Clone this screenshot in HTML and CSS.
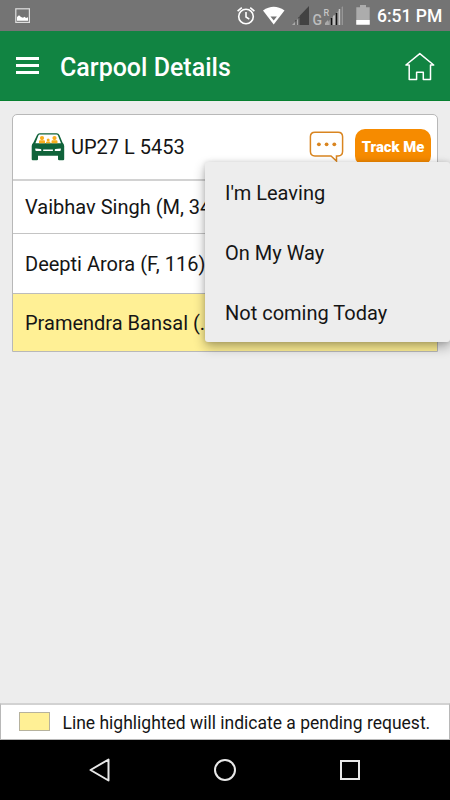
FILE: index.html
```html
<!DOCTYPE html>
<html lang="en">
<head>
<meta charset="utf-8">
<title>Carpool Details</title>
<link rel="stylesheet" href="styles.css">
</head>
<body>
<div class="screen">
  <div class="status">
    <svg class="shot" width="16" height="16" viewBox="0 0 16 16"><rect x=".8" y=".8" width="13.6" height="13.6" fill="none" stroke="#dedede" stroke-width="1.2"/><path d="M2 12.700V9l2-1.800L6 9l2 .8 1.500-1L11 10l2-.8v3.500z" fill="#fff"/></svg>
    <svg class="tray" width="126" height="31" viewBox="0 0 126 31">
      <g fill="none" stroke="#fff" stroke-width="1.6"><circle cx="11" cy="16.500" r="7.300"/><path d="M11 12v5l3.300 2.200M2.600 11.200l4.200-3.600M19.400 11.200l-4.200-3.600"/></g>
      <path d="M28 10.500Q38.700 3 49.500 10.500L38.700 24.500z" fill="#fff"/><path d="M35.500 16.500h6.400l-3.200 4z" fill="#747474"/>
      <path d="M64.500 25V16L74 6V25z" fill="#424242"/><path d="M57 25l7.500-7.500V25z" fill="#aaa"/><path d="M61 20v5M64 17v8" stroke="#333" stroke-width="1"/>
      <path d="M90 25L108 6v19z" fill="#969696"/><path d="M96.500 18v7M101.500 13v12" stroke="#111" stroke-width="1.500"/><path d="M99 15.500V25M104.500 9v16" stroke="#c8c8c8" stroke-width="1.500"/><path d="M106 8v17" stroke="#6b6b6b"/>
      <path d="M90 25v-2l3-3 1 5z" fill="#aaa"/>
      <text class="net" x="77.500" y="24.500">G</text><text class="roam" x="88.500" y="16">R</text>
    </svg>
    <svg class="battery" width="14" height="20" viewBox="0 0 14 20"><path d="M.3 2.300H4V0h6v2.300h3.700V19.600H.3z" fill="#acacac"/><path d="M.3 15h13.400v4.700H.3z" fill="#fff"/></svg>
    <span class="clock">6:51 PM</span>
  </div>
  <header class="bar">
    <div class="burger"><i></i><i></i><i></i></div>
    <h1>Carpool Details</h1>
    <svg class="home" width="32" height="30" viewBox="0 0 32 30"><path d="M15.800 1.600L29.700 13H26.500v14.600H19.300V20.200H12.600v7.400H5.200V13H1.900z" fill="none" stroke="#fff" stroke-width="1.500" stroke-linejoin="round"/></svg>
  </header>
  <main>
    <section class="card">
      <div class="row vehicle">
        <svg class="car" width="34" height="28" viewBox="0 0 34 28">
          <path fill-rule="evenodd" fill="#10633a" d="M8.700.3H25.700Q27.600.3 28.500 2.200L31.500 9.500Q33.200 11 33.200 13V26.200Q33.200 27.300 32.100 27.300H28.200Q27 27.300 27 26.200V22.700H7V26.200Q7 27.300 5.900 27.300H1.800Q.7 27.300.7 26.200V13Q.7 11 2.400 9.500L5.900 2.200Q6.800.3 8.700.3zM8.700 1.600Q7.900 1.600 7.400 2.600L4.400 10.300H30L27 2.600Q26.500 1.600 25.700 1.600z"/>
          <g fill="#f9ae1c"><circle cx="11" cy="5.100" r="2.100"/><circle cx="17.200" cy="7" r="1.500"/><circle cx="23.500" cy="5.100" r="2.100"/><path d="M8 10.300V8.500Q8 7.300 9 7.300h4q1 0 1 1.200v1.800zM15 10.300V9.500Q15 8.600 16 8.600h2.400q1 0 1 .9v.8zM20.500 10.300V8.500q0-1.200 1-1.200h4q1 0 1 1.200v1.800z"/></g>
          <path d="M4.300 15.600l5.400.5q.6 0 .6.800v1.200H5.500q-1.200 0-1.200-1zM29.800 15.600l-5.400.5q-.6 0-.6.800v1.200h4.800q1.200 0 1.200-1z" fill="#fff"/><rect x="12.200" y="16.500" width="9.700" height="1.500" fill="#fff"/>
        </svg>
        <span class="plate">UP27 L 5453</span>
        <svg class="chat" width="36" height="32" viewBox="0 0 36 32"><path d="M6 1.200H29Q33.600 1.200 33.600 5.800V20.300Q33.600 25 29 25H27.500V30L22 25H6Q1.400 25 1.400 20.300V5.800Q1.400 1.200 6 1.200z" fill="#fff" stroke="#d98520" stroke-width="1.500"/><g fill="#d98520"><circle cx="9.900" cy="13.300" r="1.900"/><circle cx="17.600" cy="13.300" r="1.900"/><circle cx="25.300" cy="13.300" r="1.900"/></g></svg>
        <button class="track">Track Me</button>
      </div>
      <div class="row first">Vaibhav Singh (M, 34)</div>
      <div class="row second">Deepti Arora (F, 116)</div>
      <div class="row pending">Pramendra Bansal (...</div>
    </section>
    <ul class="menu"><li>I'm Leaving</li><li>On My Way</li><li>Not coming Today</li></ul>
  </main>
  <footer class="legend"><span class="swatch"></span><span class="note">Line highlighted will indicate a pending request.</span></footer>
  <nav class="nav">
    <svg width="24" height="26" viewBox="0 0 24 26"><path d="M20.500 2.500v21L2.500 13z" fill="none" stroke="#e8e8e8" stroke-width="2" stroke-linejoin="round"/></svg>
    <svg width="24" height="26" viewBox="0 0 24 26"><circle cx="12" cy="13" r="10" fill="none" stroke="#e8e8e8" stroke-width="2"/></svg>
    <svg width="24" height="26" viewBox="0 0 24 26"><rect x="3" y="4" width="18" height="18" fill="none" stroke="#e8e8e8" stroke-width="2"/></svg>
  </nav>
</div>
</body>
</html>
```
FILE: styles.css
```css
* { box-sizing: border-box; }
body { margin: 0; font-family: Roboto, sans-serif; color: #151515; }
svg { display: block; flex: none; }
.screen { width: 450px; height: 800px; display: flex; flex-direction: column; background: #ededed; overflow: hidden; }
.status { height: 31px; flex: none; display: flex; background: #747474; }
.shot { margin: 8px 0 0 15px; }
.tray { margin-left: 204px; }
.net { font-size: 14px; font-weight: 500; fill: #bdbdbd; }
.roam { font-size: 9px; font-weight: 500; fill: #c5c5c5; }
.battery { margin: 5px 0 0 -5px; }
.clock { margin-left: 7px; line-height: 33px; font-size: 17.500px; font-weight: 500; color: #fff; white-space: nowrap; }
.bar { height: 70px; flex: none; display: flex; align-items: center; padding: 0 14px 0 16px; background: #118442; border-bottom: 1px solid #078030; color: #fff; }
.burger { width: 23px; display: grid; gap: 4px; margin-top: -1px; }
.burger i { height: 3px; background: #fff; }
.bar h1 { margin: 5px 0 0 21px; font-size: 25px; line-height: 30px; font-weight: 500; white-space: nowrap; }
.home { margin-left: auto; margin-top: 2px; }
main { flex: 1; position: relative; padding: 13px 12px; }
.card { border: 1px solid #b8b8b8; border-radius: 5px 5px 0 0; background: #fff; overflow: hidden; }
.row { height: 59px; padding: 0 12px; display: flex; align-items: center; font-size: 20px; white-space: nowrap; border-top: 1px solid #bcbcbc; }
.vehicle { height: 64px; border-top: 0; padding: 0 6px 0 18px; }
.first { height: 54px; border-top: 2px solid #d2d2d2; }
.second { height: 60px; border-top-color: #c4c4c4; }
.pending { height: 58px; background: #fff095; }
.plate { margin: 0 0 0 6px; }
.chat { margin-left: auto; margin-top: -1px; }
.track { width: 76px; height: 37px; margin: 0 0 0 10px; padding: 0; border: 0; border-radius: 10px; background: #f68b00; color: #fff; font: 900 14.800px Roboto, sans-serif; }
.menu { position: absolute; top: 61px; left: 205px; width: 245px; height: 180px; margin: 0; padding: 0 20px; list-style: none; background: #ededed; border-radius: 3px; box-shadow: 0 5px 12px rgba(0,0,0,.32), 0 0 5px rgba(0,0,0,.12); }
.menu li { height: 60px; line-height: 62px; font-size: 20px; white-space: nowrap; }
.legend { height: 37px; flex: none; display: flex; align-items: center; padding-left: 18px; background: #fff; border: 1px solid #b8b8b8; border-top: 2px solid #d2d2d2; }
.swatch { width: 31px; height: 19px; margin-top: -1px; background: #fff095; border: 1px solid #b6b29d; }
.note { margin: 1px 0 0 12.500px; font-size: 17.500px; white-space: nowrap; }
.nav { height: 60px; flex: none; display: flex; justify-content: center; align-items: center; gap: 101px; background: #000; }
```
